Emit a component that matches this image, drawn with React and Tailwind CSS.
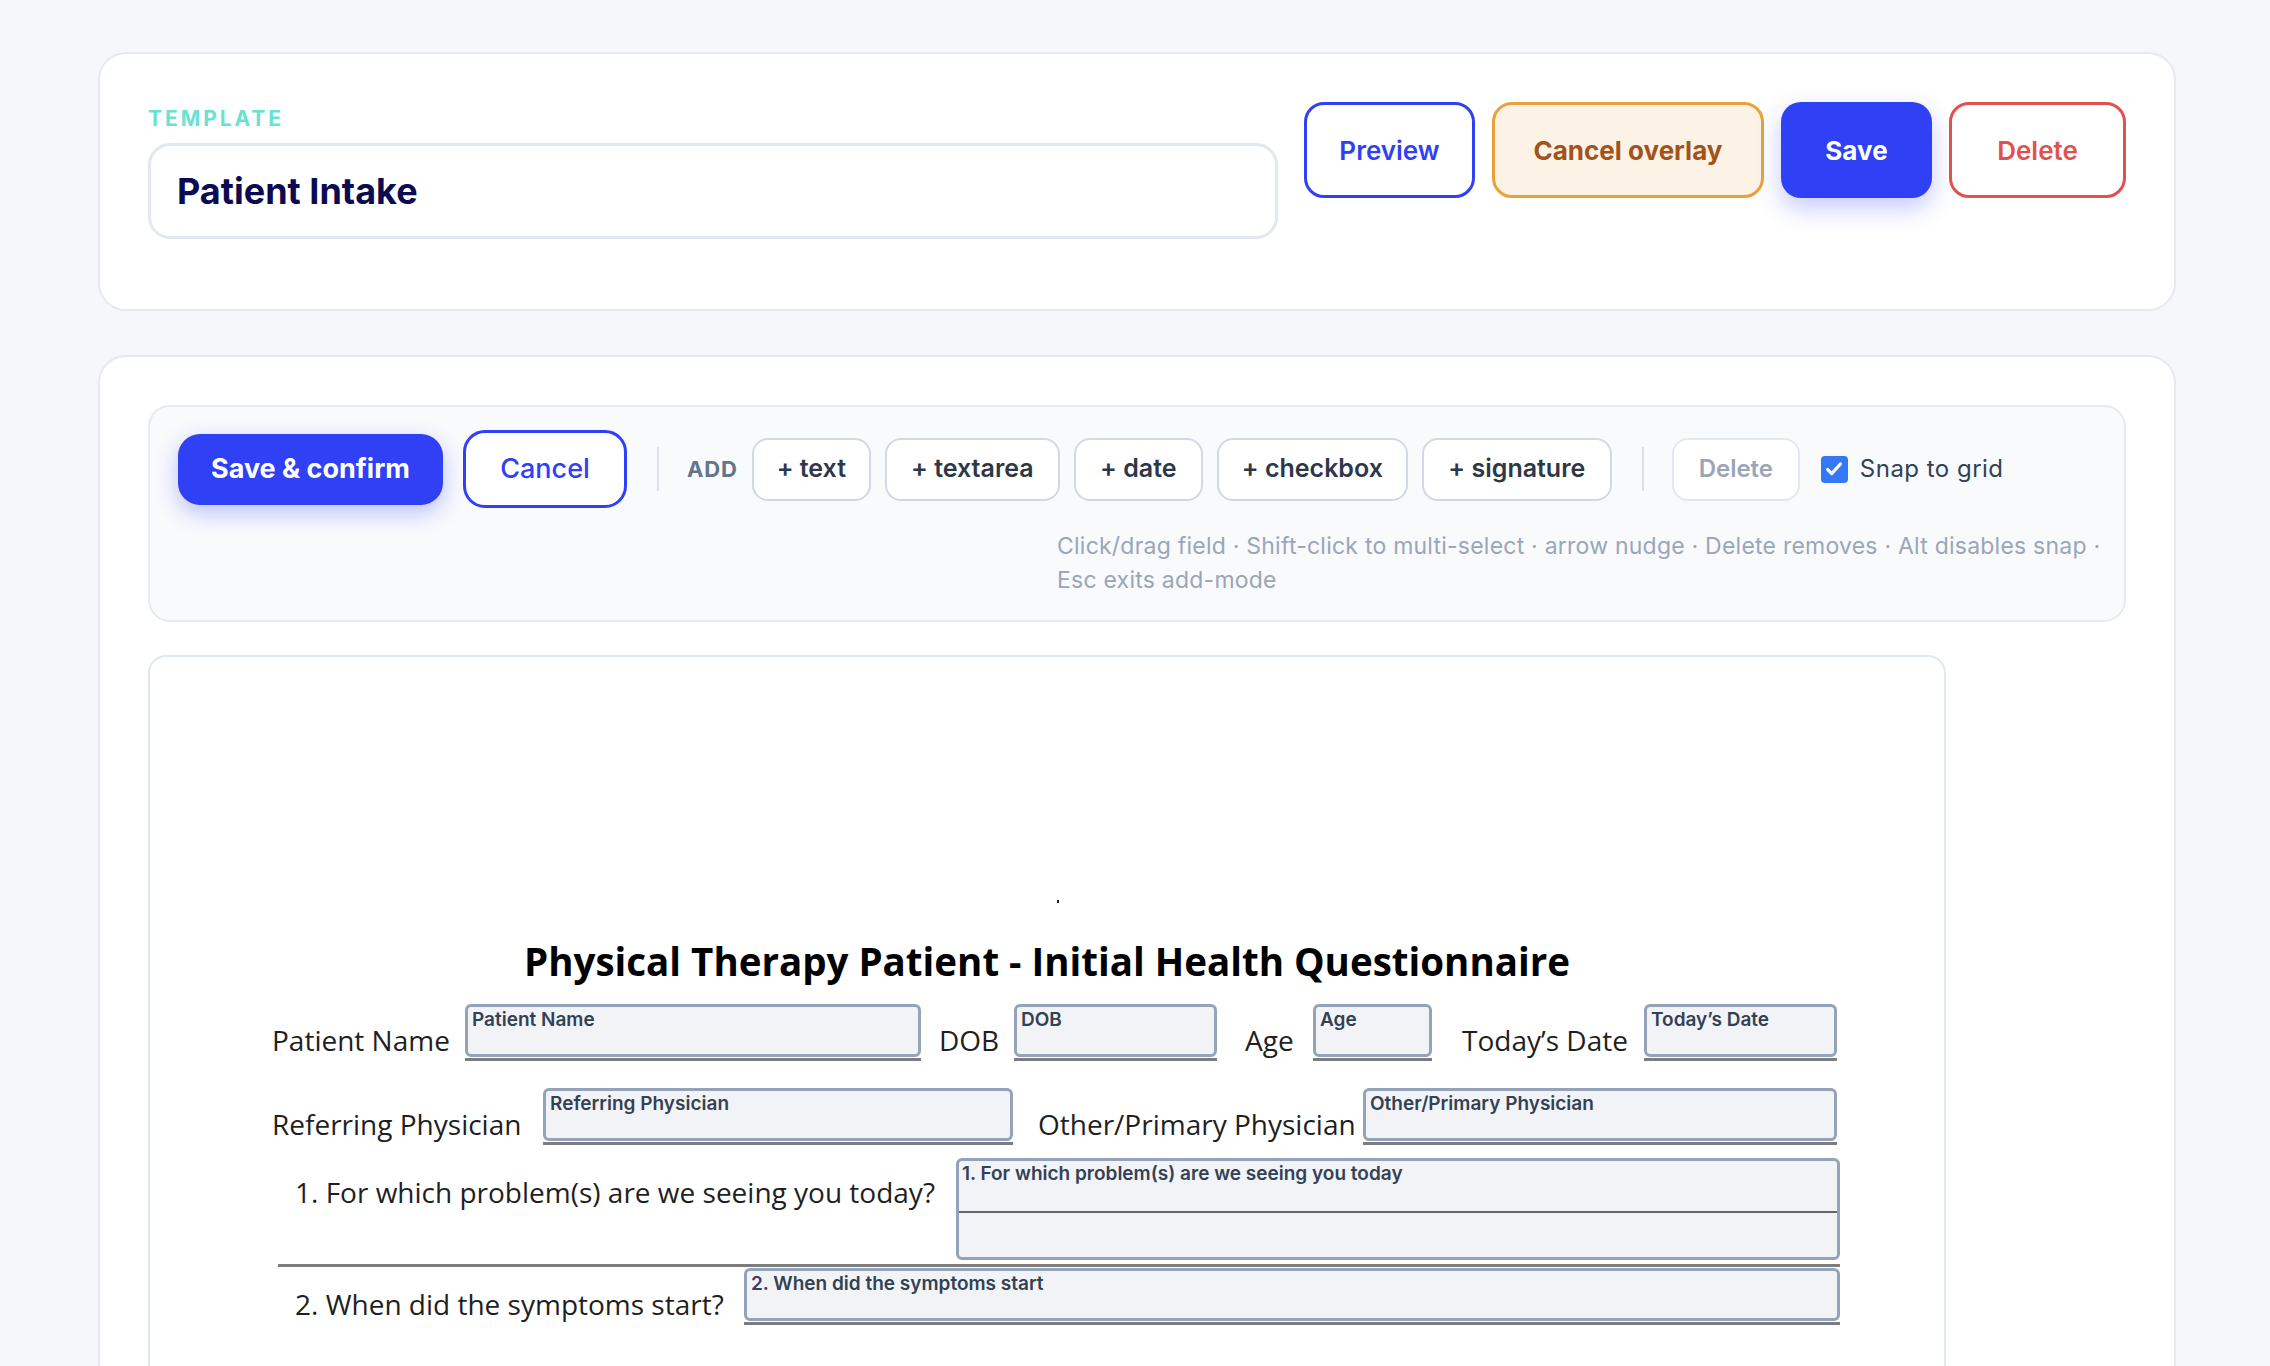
import React from 'react'

const ui = "font-['Inter',sans-serif]"
const pdf = "font-['Open_Sans',sans-serif]"

const addTypes = [
  ['text', 'w-[119px]'],
  ['textarea', 'w-[175px]'],
  ['date', 'w-[129px]'],
  ['checkbox', 'w-[191px]'],
  ['signature', 'w-[190px]'],
]

// overlay box sitting on the PDF's own underline
function Field({ label, w }) {
  return (
    <div className={`${w} shrink-0`}>
      <div className="h-[53px] rounded-[6px] border-[3px] border-[#94a3b8] bg-[#f2f3f6] px-[4px] pt-[2px]">
        <span className={`${ui} block whitespace-nowrap text-[19px] font-semibold leading-[22px] text-[#334155]`}>{label}</span>
      </div>
      <div className="mt-[1px] h-[3px] bg-[#7d7d7d]" />
    </div>
  )
}

function PdfLabel({ className = '', children }) {
  return (
    <div className={`shrink-0 self-end mb-[4px] ${className}`}>
      <span className={`${pdf} whitespace-nowrap text-[28px] leading-[34px] text-[#1f1f1f]`}>{children}</span>
    </div>
  )
}

export default function App() {
  return (
    <div className={`${ui} min-h-screen bg-[#f5f7fa] pl-[98px] pr-[94px] pt-[52px]`}>
      {/* template header */}
      <div className="rounded-[28px] border-2 border-[#e6e9ef] bg-white px-[48px] pt-[48px] pb-[70px]">
        <div className="flex items-start gap-[26px]">
          <div className="flex-1">
            <div className="mt-[3px] mb-[10px] text-[21px] font-bold leading-[28px] tracking-[0.14em] text-[#6ae2d2]">TEMPLATE</div>
            <div className="flex h-[96px] items-center rounded-[22px] border-[3px] border-[#e2e8f0] px-[26px]">
              <span className="text-[36px] font-bold text-[#0c0b52]">Patient Intake</span>
            </div>
          </div>
          <div className="flex gap-[17px]">
            <button className="h-[96px] w-[171px] rounded-[20px] border-[3px] border-[#2f40f5] bg-white text-[26px] font-semibold text-[#2f40f5]">
              Preview
            </button>
            <button className="h-[96px] w-[272px] rounded-[20px] border-[3px] border-[#e9a23b] bg-[#fcf3e6] text-[26px] font-bold text-[#a3521c]">
              Cancel overlay
            </button>
            <button className="h-[96px] w-[151px] rounded-[20px] bg-[#2f40f5] text-[26px] font-bold text-white shadow-[0_10px_24px_rgba(47,64,245,0.28)]">
              Save
            </button>
            <button className="h-[96px] w-[177px] rounded-[20px] border-[3px] border-[#e0524d] bg-white text-[26px] font-semibold text-[#e0524d]">
              Delete
            </button>
          </div>
        </div>
      </div>

      {/* overlay editor */}
      <div className="mt-[44px] rounded-[28px] border-2 border-[#e6e9ef] bg-white px-[48px] pt-[48px]">
        <div className="rounded-[22px] border-2 border-[#e5e9f0] bg-[#f8fafc] px-[28px] pt-[23px] pb-[23px]">
          <div className="flex h-[78px] items-center gap-[14px]">
            <button className="h-[71px] w-[265px] rounded-[22px] bg-[#2f40f5] text-[27px] font-bold text-white shadow-[0_8px_22px_rgba(47,64,245,0.3)]">
              Save &amp; confirm
            </button>
            <button className="ml-[6px] h-[78px] w-[164px] rounded-[22px] border-[3px] border-[#2f40f5] bg-white text-[27px] font-medium text-[#2f40f5]">
              Cancel
            </button>
            <div className="ml-[16px] h-[44px] w-[2px] bg-[#dbe1ea]" />
            <span className="ml-[14px] text-[22px] font-bold tracking-[0.04em] text-[#64748b]">ADD</span>
            {addTypes.map(([t, w]) => (
              <button key={t} className={`h-[63px] ${w} rounded-[16px] border-2 border-[#d2d9e4] bg-white text-[25px] font-semibold text-[#2d3748]`}>
                + {t}
              </button>
            ))}
            <div className="ml-[16px] h-[44px] w-[2px] bg-[#dbe1ea]" />
            <button className="ml-[14px] h-[63px] w-[128px] rounded-[16px] border-2 border-[#e2e8f0] bg-white text-[24px] font-semibold text-[#9aa6b8]">
              Delete
            </button>
            <label className="ml-[7px] flex items-center gap-[12px]">
              <span className="flex h-[27px] w-[27px] items-center justify-center rounded-[4px] bg-[#3478f6]">
                <svg viewBox="0 0 24 24" className="h-[22px] w-[22px]" fill="none" stroke="white" strokeWidth="3.4" strokeLinecap="round" strokeLinejoin="round">
                  <path d="M5 12.5l4.5 4.5L19 6.5" />
                </svg>
              </span>
              <span className="text-[24px] tracking-[0.02em] text-[#334155]">Snap to grid</span>
            </label>
          </div>
          <div className="mt-[21px] flex justify-end">
            <p className="w-[1039px] text-[23px] leading-[34px] tracking-[0.01em] text-[#9aa6b8]">
              <span className="block whitespace-nowrap">Click/drag field · Shift-click to multi-select · arrow nudge · Delete removes · Alt disables snap ·</span>
              <span className="block whitespace-nowrap">Esc exits add-mode</span>
            </p>
          </div>
        </div>

        {/* pdf page */}
        <div className="mt-[33px] h-[1100px] w-[1798px] rounded-[18px] border-2 border-[#e2e8f0] bg-white pt-[243px]">
          <div className="ml-[907px] h-[3px] w-[2px] bg-[#222]" />
          <h1 className={`${pdf} mt-[35px] text-center text-[38.5px] font-bold leading-[46px] text-black`}>
            Physical Therapy Patient - Initial Health Questionnaire
          </h1>

          <div className="mt-[20px] ml-[122px] flex">
            <PdfLabel className="w-[193px]">Patient Name</PdfLabel>
            <Field label="Patient Name" w="w-[456px]" />
            <PdfLabel className="w-[93px] pl-[18px]">DOB</PdfLabel>
            <Field label="DOB" w="w-[203px]" />
            <PdfLabel className="w-[96px] pl-[28px]">Age</PdfLabel>
            <Field label="Age" w="w-[119px]" />
            <PdfLabel className="w-[212px] pl-[30px]">Today’s Date</PdfLabel>
            <Field label="Today’s Date" w="w-[193px]" />
          </div>

          <div className="mt-[27px] ml-[122px] flex">
            <PdfLabel className="w-[271px]">Referring Physician</PdfLabel>
            <Field label="Referring Physician" w="w-[470px]" />
            <PdfLabel className="w-[350px] pl-[25px]">Other/Primary Physician</PdfLabel>
            <Field label="Other/Primary Physician" w="w-[474px]" />
          </div>

          <div className="mt-[13px] ml-[128px] w-[1562px]">
            <div className="flex items-start">
              <div className="flex-1 pt-[17px] pl-[17px]">
                <span className={`${pdf} whitespace-nowrap text-[28px] leading-[34px] text-[#1f1f1f]`}>
                  1. For which problem(s) are we seeing you today?
                </span>
              </div>
              <div className="h-[102px] w-[884px] rounded-[6px] border-[3px] border-[#94a3b8] bg-[#f2f3f6] pt-[2px]">
                <span className={`${ui} block px-[3px] text-[19px] font-semibold leading-[22px] text-[#334155]`}>
                  1. For which problem(s) are we seeing you today
                </span>
                <div className="mt-[26px] h-[2px] bg-[#666]" />
              </div>
            </div>
            <div className="mt-[4px] h-[3px] bg-[#7d7d7d]" />
            <div className="mt-[1px] flex">
              <PdfLabel className="w-[466px] pl-[17px]">2. When did the symptoms start?</PdfLabel>
              <Field label="2. When did the symptoms start" w="w-[1096px]" />
            </div>
          </div>
        </div>
      </div>
    </div>
  )
}
